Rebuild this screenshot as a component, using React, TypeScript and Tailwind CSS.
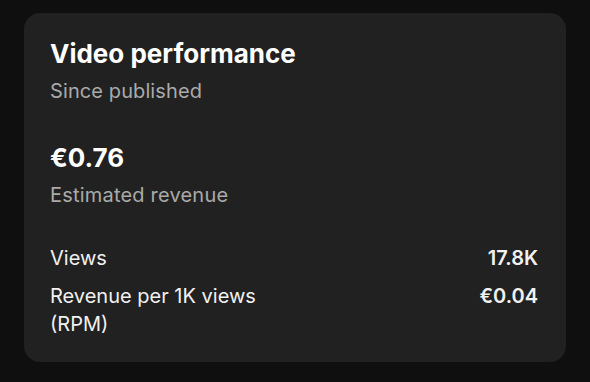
export default function App() {
  return (
    <div
      className="w-[590px] h-[382px] bg-[#0f0f0f] pt-[13px] pl-[24px]"
      style={{ fontFamily: 'Inter, "Noto Sans", sans-serif' }}
    >
      <div className="w-[542px] h-[349px] bg-[#212121] rounded-[16px] pl-[26px] pr-[28px] pt-[25px]">
        {/* Heading */}
        <h1 className="text-[26px] leading-[32px] font-bold text-white">Video performance</h1>
        <p className="text-[20px] leading-[26px] text-[#aaaaaa] mt-[8px] tracking-[0.1px]">Since published</p>

        {/* Revenue */}
        <div className="mt-[38px]">
          <div className="text-[26px] leading-[32px] font-bold text-white">€0.76</div>
          <div className="text-[20px] leading-[26px] text-[#aaaaaa] mt-[8px] tracking-[0.2px]">Estimated revenue</div>
        </div>

        {/* Metrics */}
        <div className="mt-[36px] flex flex-col gap-[10px] text-[20px] leading-[28px] text-[#f1f1f1]">
          <div className="flex justify-between">
            <span>Views</span>
            <span className="font-semibold">17.8K</span>
          </div>
          <div className="flex justify-between">
            <span className="w-[250px]">Revenue per 1K views (RPM)</span>
            <span className="font-semibold">€0.04</span>
          </div>
        </div>
      </div>
    </div>
  );
}
